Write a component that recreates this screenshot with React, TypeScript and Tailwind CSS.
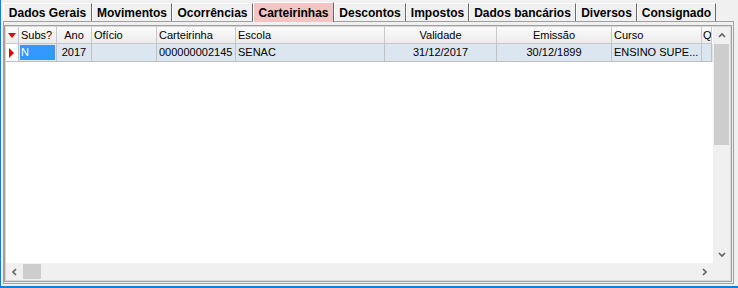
const tabs = [
  { label: 'Dados Gerais', w: 'w-[89px]' },
  { label: 'Movimentos', w: 'w-[80px]' },
  { label: 'Ocorrências', w: 'w-[81px]' },
  { label: 'Carteirinhas', w: 'w-[81px]', active: true },
  { label: 'Descontos', w: 'w-[72px]' },
  { label: 'Impostos', w: 'w-[63px]' },
  { label: 'Dados bancários', w: 'w-[107px]' },
  { label: 'Diversos', w: 'w-[61px]' },
  { label: 'Consignado', w: 'w-[79px]' },
];

const cols = [
  { label: 'Subs?', w: 'w-[38px]', align: 'justify-start pl-[2px]', value: 'N' },
  { label: 'Ano', w: 'w-[35px]', align: 'justify-center', value: '2017' },
  { label: 'Ofício', w: 'w-[65px]', align: 'justify-start pl-[2px]', value: '' },
  { label: 'Carteirinha', w: 'w-[79px]', align: 'justify-start pl-[2px]', value: '000000002145' },
  { label: 'Escola', w: 'w-[149px]', align: 'justify-start pl-[2px]', value: 'SENAC' },
  { label: 'Validade', w: 'w-[112px]', align: 'justify-center', value: '31/12/2017' },
  { label: 'Emissão', w: 'w-[115px]', align: 'justify-center', value: '30/12/1899' },
  { label: 'Curso', w: 'w-[90px]', align: 'justify-start pl-[2px]', value: 'ENSINO SUPE...' },
  { label: 'Q', w: 'w-[10px]', align: 'justify-start pl-[1px]', value: '' },
];

const Chevron = ({ dir }: { dir: 'up' | 'down' | 'left' | 'right' }) => {
  const pts = {
    up: '1,5 4,2 7,5',
    down: '1,2 4,5 7,2',
    left: '5,1 2,4 5,7',
    right: '2,1 5,4 2,7',
  }[dir];
  const box = dir === 'up' || dir === 'down' ? 'w-[8px] h-[7px]' : 'w-[7px] h-[8px]';
  const vb = dir === 'up' || dir === 'down' ? '0 0 8 7' : '0 0 7 8';
  return (
    <svg className={box} viewBox={vb}>
      <polyline points={pts} fill="none" stroke="#606060" strokeWidth="1.6" />
    </svg>
  );
};

export default function App() {
  return (
    <div className="w-[738px] h-[288px] bg-[#f0f0f0] border-l border-b-2 border-[#1a7bd4] flex flex-col overflow-hidden font-['Liberation_Sans',sans-serif] text-black">
      {/* Tabs */}
      <div className="h-[21px] flex items-end pl-[2px] shrink-0">
        {tabs.map((t) =>
          t.active ? (
            <div
              key={t.label}
              className={`${t.w} h-[20px] mb-[-1px] relative z-10 bg-[#f2c4c4] border-t border-l border-white border-r border-r-[#696969] flex items-center justify-center text-[12px] font-bold`}
            >
              {t.label}
            </div>
          ) : (
            <div
              key={t.label}
              className={`${t.w} h-[18px] border-t border-l border-white border-r border-r-[#696969] flex items-center justify-center text-[12px] font-bold`}
            >
              {t.label}
            </div>
          ),
        )}
      </div>

      {/* Panel */}
      <div className="ml-[2px] w-[731px] h-[263px] border border-[#a0a0a0] pt-[3px] pr-[1px] pb-[1px] flex flex-col">
        <div className="flex-1 border border-[#a0a0a0] flex flex-col">
          <div className="flex-1 border border-[#d8d8d8] flex flex-col bg-white text-[11px]">
            <div className="flex-1 flex min-h-0">
              {/* Grid body */}
              <div className="flex-1 flex flex-col">
                {/* Header */}
                <div className="h-[17px] flex shrink-0">
                  <div className="w-[13px] h-full bg-linear-to-b from-[#fbfbfb] to-[#ececec] border-r border-b border-[#c8c8c8] flex items-center justify-center">
                    <svg className="w-[8px] h-[5px]" viewBox="0 0 8 5">
                      <polygon points="0,0 8,0 4,5" fill="#e80000" />
                    </svg>
                  </div>
                  {cols.map((c) => (
                    <div
                      key={c.label}
                      className={`${c.w} h-full bg-linear-to-b from-[#fbfbfb] to-[#ececec] border-r border-b border-[#c8c8c8] flex items-center overflow-hidden whitespace-nowrap ${c.align}`}
                    >
                      {c.label}
                    </div>
                  ))}
                </div>
                {/* Row */}
                <div className="h-[18px] flex shrink-0 bg-[#dce6f1]">
                  <div className="w-[13px] h-full bg-white border-r border-b border-[#c0c0c0] flex items-center justify-start pl-[3px]">
                    <svg className="w-[5px] h-[10px]" viewBox="0 0 5 10">
                      <polygon points="0,0 5,5 0,10" fill="#e80000" />
                    </svg>
                  </div>
                  {cols.map((c, i) =>
                    i === 0 ? (
                      <div key={c.label} className={`${c.w} h-full border-r border-b border-[#c0c0c0] p-[1px]`}>
                        <div className="h-full bg-[#3399ff] outline outline-dotted outline-[#c57a2c] -outline-offset-1 text-white flex items-center pl-[1px]">
                          {c.value}
                        </div>
                      </div>
                    ) : (
                      <div
                        key={c.label}
                        className={`${c.w} h-full border-r border-b border-[#c0c0c0] flex items-center overflow-hidden whitespace-nowrap ${c.align}`}
                      >
                        {c.value}
                      </div>
                    ),
                  )}
                </div>
                <div className="flex-1 bg-white" />
              </div>

              {/* Vertical scrollbar */}
              <div className="w-[17px] bg-[#f0f0f0] flex flex-col">
                <div className="h-[17px] flex items-center justify-center">
                  <Chevron dir="up" />
                </div>
                <div className="h-[101px] mx-[1px] bg-[#cdcdcd]" />
                <div className="flex-1" />
                <div className="h-[17px] flex items-center justify-center">
                  <Chevron dir="down" />
                </div>
              </div>
            </div>

            {/* Horizontal scrollbar */}
            <div className="h-[17px] bg-[#f0f0f0] flex shrink-0">
              <div className="w-[17px] flex items-center justify-center">
                <Chevron dir="left" />
              </div>
              <div className="w-[18px] my-[1px] bg-[#cdcdcd]" />
              <div className="flex-1" />
              <div className="w-[17px] flex items-center justify-center">
                <Chevron dir="right" />
              </div>
              <div className="w-[17px]" />
            </div>
          </div>
        </div>
      </div>
    </div>
  );
}
